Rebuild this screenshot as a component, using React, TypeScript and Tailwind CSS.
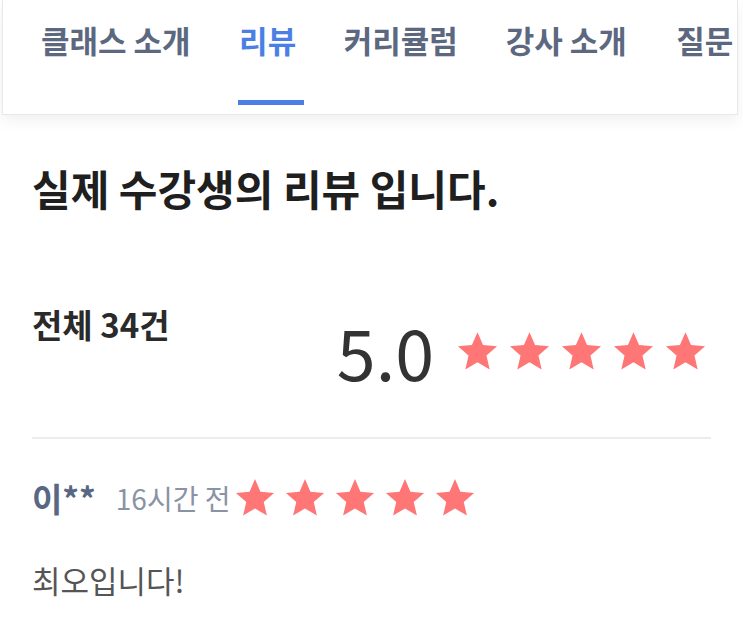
import React from "react";

const font = { fontFamily: '"Noto Sans CJK KR", "Noto Sans", sans-serif' };

function Star({ size }: { size: number }) {
  return (
    <svg width={size} height={size} viewBox="0 0 24 24" className="shrink-0">
      <polygon
        points="12,1.2 15.1,8.4 22.9,9.1 17,14.3 18.8,22 12,18 5.2,22 7,14.3 1.1,9.1 8.9,8.4"
        fill="#ff7676"
      />
    </svg>
  );
}

const tabs = [
  { t: "클래스 소개", m: "ml-0" },
  { t: "리뷰", m: "ml-[41px]" },
  { t: "커리큘럼", m: "ml-[40px]" },
  { t: "강사 소개", m: "ml-[48px]" },
  { t: "질문", m: "ml-[42px]" },
];

export default function App() {
  return (
    <div className="w-[743px] h-[634px] bg-white overflow-hidden" style={font}>
      <div className="ml-[2px] mr-[5px] h-[115px] border-x border-b border-[#e4e8ef] bg-white shadow-[0_6px_14px_rgba(0,0,0,0.06)]">
        <div className="flex items-start pl-[38px] pt-[17px]">
          {tabs.map(({ t, m }) => {
            const active = t === "리뷰";
            return (
              <div key={t} className={`relative flex flex-col items-center ${m}`}>
                <span
                  className={`text-[31px] leading-[46px] font-bold whitespace-nowrap ${
                    active ? "text-[#4b7fe5]" : "text-[#5c6880]"
                  }`}
                >
                  {t}
                </span>
                <div
                  className={`mt-[37px] h-[5px] w-[66px] ml-[6px] ${active ? "bg-[#4b7fe5]" : "bg-transparent"}`}
                />
              </div>
            );
          })}
        </div>
      </div>

      <div className="px-[32px]">
        <h1 className="mt-[47px] text-[42px] leading-[52px] font-bold text-[#1f1f1f]">
          실제 수강생의 리뷰 입니다.
        </h1>

        <div className="mt-[107px] flex items-start justify-between">
          <div className="text-[33px] leading-[40px] font-bold text-[#2a2a2a] -mt-[17px]">전체 34건</div>
          <div className="flex items-center gap-[22px] pr-[4px]">
            <span className="text-[70px] leading-[60px] text-[#333333]">5.0</span>
            <div className="flex items-center gap-[9px]">
              <Star size={43} />
              <Star size={43} />
              <Star size={43} />
              <Star size={43} />
              <Star size={43} />
            </div>
          </div>
        </div>

        <div className="mt-[56px] h-[2px] bg-[#ececec]" />

        <div className="mt-[37px] flex items-center h-[44px]">
          <span className="text-[33px] leading-[44px] font-bold text-[#5a6782]">이**</span>
          <span className="ml-[20px] text-[28px] leading-[36px] text-[#8a93a5]">16시간 전</span>
          <div className="ml-[4px] flex items-center gap-[8px]">
            <Star size={42} />
            <Star size={42} />
            <Star size={42} />
            <Star size={42} />
            <Star size={42} />
          </div>
        </div>

        <div className="mt-[40px] text-[31px] leading-[40px] text-[#555555]">최오입니다!</div>
      </div>
    </div>
  );
}
